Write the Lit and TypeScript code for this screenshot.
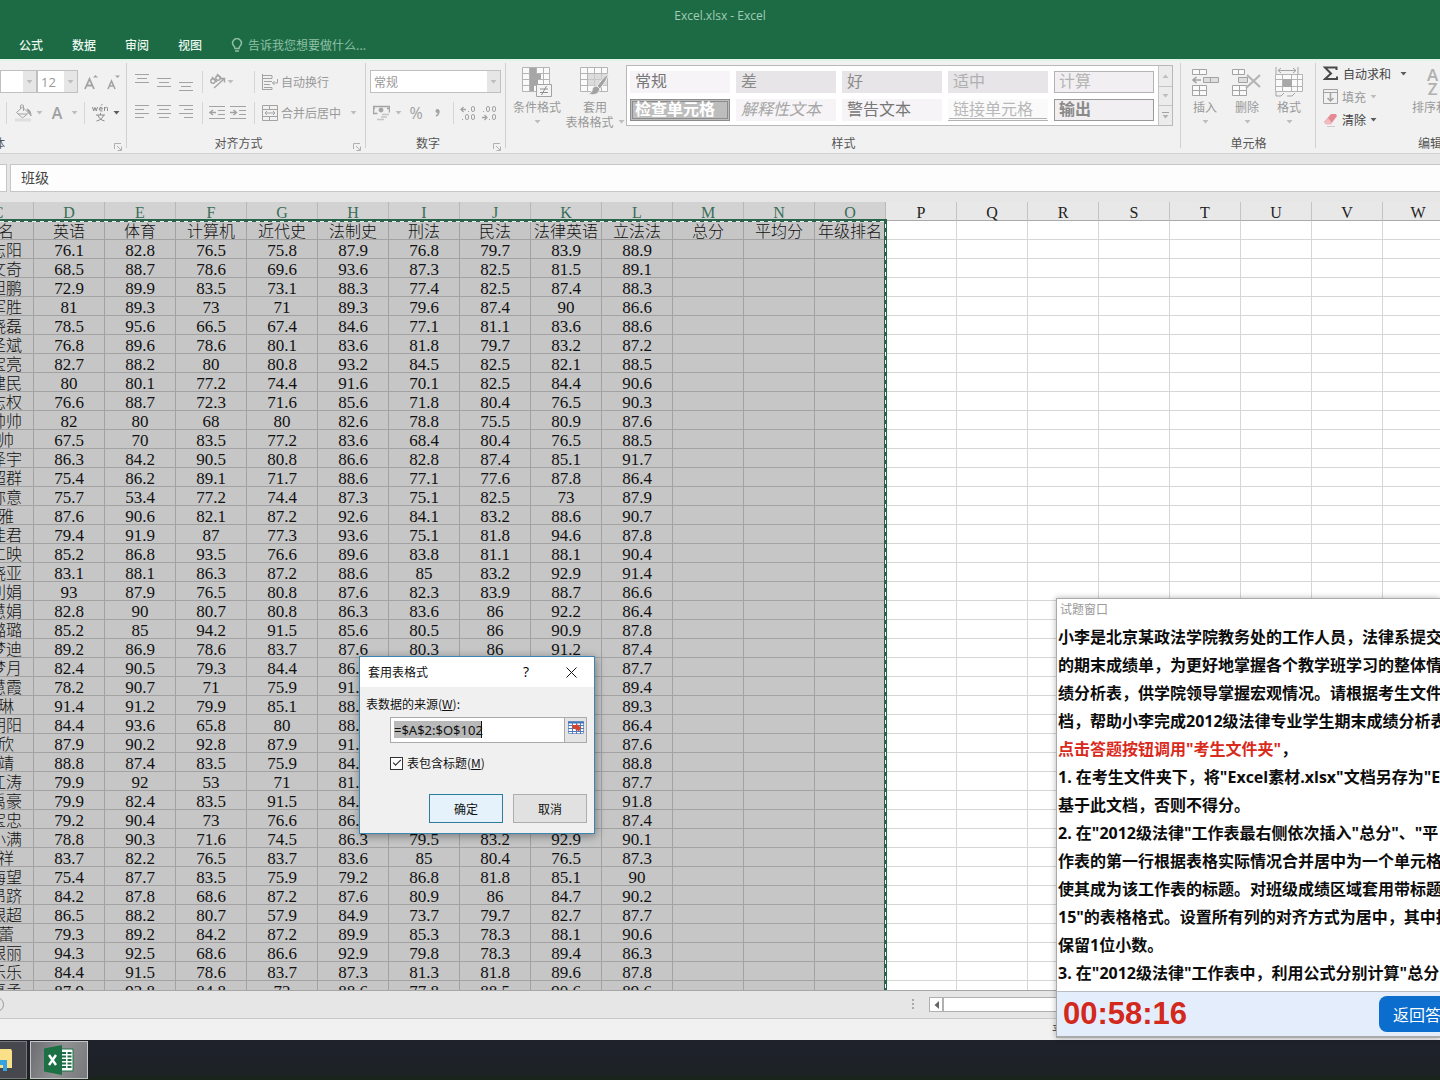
import { LitElement, html, svg, css, nothing } from "lit";
import { customElement } from "lit/decorators.js";
import { classMap } from "lit/directives/class-map.js";

const COLUMNS = "CDEFGHIJKLMNOPQRSTUVW".split("");
const SELECTED = 13;
const HEADS = ["　名", "英语", "体育", "计算机", "近代史", "法制史", "刑法", "民法", "法律英语", "立法法", "总分", "平均分", "年级排名"];

const ROWS = `　志阳|76.1 82.8 76.5 75.8 87.9 76.8 79.7 83.9 88.9
　文奇|68.5 88.7 78.6 69.6 93.6 87.3 82.5 81.5 89.1
　坦鹏|72.9 89.9 83.5 73.1 88.3 77.4 82.5 87.4 88.3
　军胜|81 89.3 73 71 89.3 79.6 87.4 90 86.6
　晓磊|78.5 95.6 66.5 67.4 84.6 77.1 81.1 83.6 88.6
　圣斌|76.8 89.6 78.6 80.1 83.6 81.8 79.7 83.2 87.2
　宝亮|82.7 88.2 80 80.8 93.2 84.5 82.5 82.1 88.5
　建民|80 80.1 77.2 74.4 91.6 70.1 82.5 84.4 90.6
　志权|76.6 88.7 72.3 71.6 85.6 71.8 80.4 76.5 90.3
　帅帅|82 80 68 80 82.6 78.8 75.5 80.9 87.6
　帅|67.5 70 83.5 77.2 83.6 68.4 80.4 76.5 88.5
　泽宇|86.3 84.2 90.5 80.8 86.6 82.8 87.4 85.1 91.7
　超群|75.4 86.2 89.1 71.7 88.6 77.1 77.6 87.8 86.4
　弥意|75.7 53.4 77.2 74.4 87.3 75.1 82.5 73 87.9
　雅|87.6 90.6 82.1 87.2 92.6 84.1 83.2 88.6 90.7
　佳君|79.4 91.9 87 77.3 93.6 75.1 81.8 94.6 87.8
　仁映|85.2 86.8 93.5 76.6 89.6 83.8 81.1 88.1 90.4
　晓亚|83.1 88.1 86.3 87.2 88.6 85 83.2 92.9 91.4
　利娟|93 87.9 76.5 80.8 87.6 82.3 83.9 88.7 86.6
　慧娟|82.8 90 80.7 80.8 86.3 83.6 86 92.2 86.4
　璐璐|85.2 85 94.2 91.5 85.6 80.5 86 90.9 87.8
　梦迪|89.2 86.9 78.6 83.7 87.6 80.3 86 91.2 87.4
　梦月|82.4 90.5 79.3 84.4 86._ - - - 87.7
　慧霞|78.2 90.7 71 75.9 91._ - - - 89.4
　琳|91.4 91.2 79.9 85.1 88._ - - - 89.3
　朝阳|84.4 93.6 65.8 80 88._ - - - 86.4
　欣|87.9 90.2 92.8 87.9 91._ - - - 87.6
　靖|88.8 87.4 83.5 75.9 84._ - - - 88.8
　江涛|79.9 92 53 71 81._ - - - 87.7
　禹豪|79.9 82.4 83.5 91.5 84._ - - - 91.8
　宝忠|79.2 90.4 73 76.6 86._ - - - 87.4
　小满|78.8 90.3 71.6 74.5 86.3 79.5 83.2 92.9 90.1
　祥|83.7 82.2 76.5 83.7 83.6 85 80.4 76.5 87.3
　海望|75.4 87.7 83.5 75.9 79.2 86.8 81.8 85.1 90
　昂跻|84.2 87.8 68.6 87.2 87.6 80.9 86 84.7 90.2
　银超|86.5 88.2 80.7 57.9 84.9 73.7 79.7 82.7 87.7
　蕾|79.3 89.2 84.2 87.2 89.9 85.3 78.3 88.1 90.6
　银丽|94.3 92.5 68.6 86.6 92.9 79.8 78.3 89.4 86.3
　乐乐|84.4 91.5 78.6 83.7 87.3 81.3 81.8 89.6 87.8
　夏孟|87.9 92.8 84.8 72 88.6 77.8 88.5 90.6 89.6`
  .split("\n")
  .map((line) => {
    const [name, marks] = line.split("|");
    return [name, ...marks.split(" ").map((m) => (m === "-" ? "" : m.replace("_", "\u2007")))];
  });

const QUESTION: { text: string; red?: boolean; tail?: string }[] = [
  { text: "小李是北京某政法学院教务处的工作人员，法律系提交" },
  { text: "的期末成绩单，为更好地掌握各个教学班学习的整体情" },
  { text: "绩分析表，供学院领导掌握宏观情况。请根据考生文件" },
  { text: "档，帮助小李完成2012级法律专业学生期末成绩分析表" },
  { text: "点击答题按钮调用\"考生文件夹\"", red: true, tail: "，" },
  { text: "1. 在考生文件夹下，将\"Excel素材.xlsx\"文档另存为\"E" },
  { text: "基于此文档，否则不得分。" },
  { text: "2. 在\"2012级法律\"工作表最右侧依次插入\"总分\"、\"平" },
  { text: "作表的第一行根据表格实际情况合并居中为一个单元格" },
  { text: "使其成为该工作表的标题。对班级成绩区域套用带标题" },
  { text: "15\"的表格格式。设置所有列的对齐方式为居中，其中排" },
  { text: "保留1位小数。" },
  { text: "3. 在\"2012级法律\"工作表中，利用公式分别计算\"总分" },
];

const icon = (w: number, h: number, body: unknown) =>
  html`<svg class="icon" width=${w} height=${h} viewBox="0 0 ${w} ${h}" fill="none" stroke="#a3a3a3" aria-hidden="true">${body}</svg>`;

const arrow = (dark = false) =>
  html`<svg class="icon" width="7" height="4" viewBox="0 0 7 4" aria-hidden="true"><path d="M0.5 0h6L3.5 3.6z" fill=${dark ? "#5a5a5a" : "#bdbdbd"} /></svg>`;

const lines = (rows: [number, number][], y = 0) =>
  icon(16, 18, rows.map(([x, w], i) => svg`<path d="M${x} ${y + i * 4 + 0.5}h${w}" />`));

const launcher = icon(9, 9, svg`<path d="M0.5 6V0.5H7M3 3l4 4M7.5 3.5v4h-4" stroke="#b0b0b0" />`);

@customElement("ribbon-bar")
export class RibbonBar extends LitElement {
  static styles = css`
    :host { display: flex; height: 94px; background: #f1f1f1; border-bottom: 1px solid #d2d2d2; overflow: hidden; box-shadow: inset 0 2px #e2f4ea; color: #999; font-size: 12px; line-height: 16px; }
    .icon { display: block; flex: none; }
    button, select, input { font: inherit; color: inherit; border: 0; background: none; padding: 0; margin: 0; }
    .group { position: relative; box-sizing: border-box; flex: none; display: flex; flex-direction: column; padding: 11px 0 2px; }
    .group::after { content: ""; position: absolute; right: 0; top: 4px; bottom: 5px; width: 1px; background: #d0d0d0; }
    .font { width: 127px; }
    .align { width: 239px; padding-left: 4px; }
    .number { width: 140px; padding-left: 4px; }
    .styles { width: 675px; padding-top: 6px; }
    .cells { width: 135px; padding-top: 6px; }
    .edit { flex: 1; min-width: 0; padding-top: 6px; overflow: hidden; }
    .edit::after { display: none; }
    .row { display: grid; align-items: center; justify-items: center; height: 23px; }
    .two { margin-top: 8px; }
    .row button { display: flex; align-items: center; justify-content: center; }
    .font .one { grid-template-columns: 37px 41px 26px 20px; }
    .font .two { grid-template-columns: 13px 20px 12px 24px 10px 10px 22px 10px; }
    .align .row { grid-template-columns: 22px 22px 22px 10px 20px 22px 10px 22px 62px 20px; }
    .align .one > .icon:nth-child(6) { justify-self: start; }
    .number .two { grid-template-columns: 22px 12px 24px 20px 10px 20px 22px; }
    .text { justify-self: start; white-space: nowrap; }
    .sep { width: 1px; height: 22px; background: #d6d6d6; }
    .caption { display: flex; align-items: center; justify-content: center; margin-top: auto; height: 16px; color: #555; position: relative; }
    .caption .icon { position: absolute; right: 4px; bottom: -1px; }
    .align .caption, .number .caption { padding-right: 20px; }
    .font .caption { justify-content: flex-start; margin-left: -19px; }
    .edit .caption { justify-content: flex-start; padding-left: 102px; white-space: nowrap; }
    .combo { display: flex; box-sizing: border-box; height: 23px; width: 100%; border: 1px solid #c0c0c0; background: #fff; align-items: stretch; }
    .combo input, .combo select { flex: 1; min-width: 0; appearance: none; padding-left: 3px; outline: 0; }
    .combo .size { font: 13px/18px "Open Sans", sans-serif; }
    .combo span { display: flex; width: 13px; align-items: center; justify-content: center; background: #e6e6e6; }
    .number .combo { width: 131px; }
    .glyph { font-family: "Open Sans", sans-serif; font-weight: 600; font-size: 16px; line-height: 20px; color: #a0a0a0; }
    .thin { font-weight: 400; }
    .body { display: flex; align-items: flex-start; }
    .big { display: flex; flex-direction: column; align-items: center; white-space: nowrap; line-height: 15px; }
    .big .pic { height: 34px; display: flex; align-items: center; }
    .big .drop { height: 15px; display: flex; align-items: center; gap: 4px; }
    .styles .body .big { width: 58px; }
    .styles .body .big:first-child { margin-left: 2px; }
    .gallery { display: flex; margin-left: 2px; height: 61px; box-sizing: border-box; border: 1px solid #b8b8b8; background: #fff; width: 547px; }
    .swatches { flex: 1; display: grid; grid-template-columns: repeat(5, 100px); gap: 6px; padding: 5px 3px 4px; }
    .swatches button { display: flex; align-items: flex-start; box-sizing: border-box; height: 22px; padding-left: 4px; font-size: 16px; line-height: 16px; background: #f6f4f6; color: #777; white-space: nowrap; border: 1px solid transparent; }
    .swatches .fill { background: #e7e5e7; color: #8b8b8b; }
    .swatches .pale { color: #b0b0b0; }
    .swatches .box { border-color: #b4b4b4; color: #b4b4b4; background: #f1eff1; }
    .swatches .check { background: #bdbdbd; border: 3px double #8c8c8c; color: #fff; font-weight: 700; line-height: 13px; padding-left: 2px; }
    .swatches .note { font-style: italic; color: #a5a5a5; }
    .swatches .link { border-bottom: 3px double #b4b4b4; color: #b8b8b8; background: #fbfafb; }
    .swatches .out { border-color: #999; color: #8a8a8a; font-weight: 700; background: #f1eff1; }
    .scroll { width: 13px; display: grid; grid-template-rows: 1fr 1fr 1fr; border-left: 1px solid #c4c4c4; background: #ececec; }
    .scroll button { display: flex; align-items: center; justify-content: center; }
    .scroll button + button { border-top: 1px solid #c4c4c4; }
    .cells .body { padding-left: 3px; }
    .cells .big { width: 42px; }
    .list { display: flex; flex-direction: column; padding-left: 7px; width: 88px; margin-top: -3px; }
    .list button { display: flex; align-items: center; gap: 4px; height: 23px; white-space: nowrap; }
    .dark { color: #444; }
    .list .wide .icon:last-child { margin-left: 5px; }
    .sort { align-items: flex-start; padding-left: 5px; }
    .sort .pic { padding-left: 15px; }
    .az { display: flex; flex-direction: column; font: 600 17px/14px "Open Sans", sans-serif; color: #b0b0b0; }
  `;

  private big(pic: unknown, label: string) {
    return html`<button class="big"><span class="pic">${pic}</span><span>${label}</span><span class="drop">${arrow()}</span></button>`;
  }

  render() {
    const grid = svg`<path d="M0.5 0.5h27v24h-27zM0 6.5h28M0 12.5h28M0 18.5h28M7.5 0v25M14.5 0v25M21.5 0v25" fill="#fafafa" stroke="#b4b4b4" />`;
    return html`
      <section class="group font">
        <div class="row one">
          <label class="combo"><input aria-label="字体" /><span>${arrow()}</span></label>
          <label class="combo"><input class="size" aria-label="字号" value="12" size="2" /><span>${arrow()}</span></label>
          <button aria-label="增大字号">${icon(14, 16, svg`<path d="M1 15L5.5 5L10 15M2.8 11.5h5.4" stroke-width="1.8" /><path d="M9 3.5h5L11.5 1z" fill="#a3a3a3" stroke="none" />`)}</button>
          <button aria-label="减小字号">${icon(14, 16, svg`<path d="M1 15L4.5 7L8 15M2.4 12h4.2" stroke-width="1.6" /><path d="M8 1.5h5L10.5 4z" fill="#a3a3a3" stroke="none" />`)}</button>
        </div>
        <div class="row two">
          <i class="sep"></i>
          <button aria-label="填充颜色">${icon(17, 18, svg`<path d="M1.5 8.5L7.500 3l6 6-6 5zM5.500 5V1.500q1.500-1.500 3 0V7M3 10h9" /><path d="M12 5q4 1 4 7l-2-3z" fill="#a3a3a3" /><path d="M0 16h16" stroke="#dedede" stroke-width="3" />`)}</button>
          ${arrow()}
          <button class="glyph" aria-label="字体颜色">A</button>
          ${arrow()}
          <i class="sep"></i>
          <button aria-label="拼音指南">${icon(16, 18, svg`<path d="M0.500 3l1.200 4L3 3.500 4.300 7 5.500 3M7 5h3.500Q10 2.500 8 3.500 6.500 6 8.500 7h2M9 1.500L10.500 0M12.500 7V3M12.500 4.500q3-2.500 3 0V7M4 11h9M8.500 9v2M6 11q1 4.500 6.500 6M11.500 11q-1 4.500-7 6" stroke="#8c8c8c" />`)}</button>
          ${arrow(true)}
        </div>
        <div class="caption">字体${launcher}</div>
      </section>

      <section class="group align">
        <div class="row one">
          <button aria-label="顶端对齐">${lines([[1, 14], [3, 10], [1, 14]], 1)}</button>
          <button aria-label="垂直居中">${lines([[1, 14], [3, 10], [1, 14]], 5)}</button>
          <button aria-label="底端对齐">${lines([[1, 14], [3, 10], [1, 14]], 9)}</button>
          <i class="sep"></i>
          <button aria-label="方向">${icon(17, 17, svg`<circle cx="4" cy="8" r="2.200" stroke-width="1.400" /><path d="M3 4l5 5M8 1l5 5" stroke-width="1.400" /><circle cx="9" cy="5" r="2.200" stroke-width="1.400" /><path d="M5 15L15 6M15.500 9.500V5.500H11.500" stroke-width="1.400" />`)}</button>
          ${arrow()}
          <i class="sep"></i>
          ${icon(16, 16, svg`<path d="M0.500 0v16M0 1.500h10v3H0M2 7.500h8M2 10.500h6M2 13.500h8v2H0M15.500 5v4h-5M12.500 7l-2 2 2 2" />`)}
          <button class="text">自动换行</button>
        </div>
        <div class="row two">
          <button aria-label="左对齐">${lines([[1, 14], [1, 9], [1, 14], [1, 9]], 1)}</button>
          <button aria-label="居中">${lines([[1, 14], [3, 10], [1, 14], [3, 10]], 1)}</button>
          <button aria-label="右对齐">${lines([[1, 14], [6, 9], [1, 14], [6, 9]], 1)}</button>
          <i class="sep"></i>
          <button aria-label="减少缩进量">${icon(17, 14, svg`<path d="M0 0.500h16M9 4.500h7M9 8.500h7M0 12.500h16" /><path d="M1 6.500h6M4 4L1 6.500 4 9" stroke-width="1.500" />`)}</button>
          <button aria-label="增加缩进量">${icon(17, 14, svg`<path d="M0 0.500h16M9 4.500h7M9 8.500h7M0 12.500h16" /><path d="M0 6.500h6M3.500 4L6.500 6.500 3.500 9" stroke-width="1.500" />`)}</button>
          <i class="sep"></i>
          ${icon(16, 16, svg`<path d="M0.500 0.500h15v15h-15zM0 4.500h16M0 11.500h16M7.500 0v4M7.500 12v4M3 8h10M5 6L3 8l2 2M11 6l2 2-2 2" />`)}
          <button class="text">合并后居中</button>
          ${arrow()}
        </div>
        <div class="caption">对齐方式${launcher}</div>
      </section>

      <section class="group number">
        <label class="combo"><select aria-label="数字格式"><option>常规</option></select><span>${arrow()}</span></label>
        <div class="row two">
          <button aria-label="会计数字格式">${icon(17, 16, svg`<path d="M4.500 8.500h-4v-7h16v6M0 3.500h2M14 3.500h3" stroke-width="1.400" /><circle cx="8" cy="5" r="2" fill="#a3a3a3" /><path d="M9 9.500h7M8 12h6M4 14.500h7" stroke="#c4c4c4" stroke-width="1.500" />`)}</button>
          ${arrow()}
          <button class="glyph thin">%</button>
          <button aria-label="千位分隔样式">${icon(8, 12, svg`<circle cx="3.500" cy="4" r="2" fill="#a3a3a3" stroke="none" /><path d="M4.800 4q0.300 3.500-2.800 5" stroke-width="1.500" />`)}</button>
          <i class="sep"></i>
          <button aria-label="增加小数位数">${icon(16, 16, svg`<path d="M1 4.500h5M3.500 2L1 4.500 3.500 7" stroke-width="1.300" /><rect x="11.500" y="1.500" width="3" height="5" rx="1.500" /><path d="M8.500 6v1M2.500 14v1" /><rect x="5.500" y="9.500" width="3" height="5" rx="1.500" /><rect x="11.500" y="9.500" width="3" height="5" rx="1.500" />`)}</button>
          <button aria-label="减少小数位数">${icon(16, 16, svg`<path d="M1 12.500h5M3.500 10L6 12.500 3.500 15" stroke-width="1.300" /><rect x="11.500" y="9.500" width="3" height="5" rx="1.500" /><path d="M8.500 14v1M2.500 6v1" /><rect x="5.500" y="1.500" width="3" height="5" rx="1.500" /><rect x="11.500" y="1.500" width="3" height="5" rx="1.500" />`)}</button>
        </div>
        <div class="caption">数字${launcher}</div>
      </section>

      <section class="group styles">
        <div class="body">
          ${this.big(icon(31, 31, svg`${grid}<path d="M8 1h6v6H8zM8 7h11v5H8zM8 12h8v6H8zM8 18h4v6H8z" fill="#a6a6a6" stroke="none" /><path d="M14.500 17.500h15v12h-15z" fill="#f4f4f4" /><path d="M18 22h8M18 25.500h8M24.500 19l-5 9" stroke="#8f8f8f" />`), "条件格式")}
          <button class="big"><span class="pic">${icon(31, 30, svg`${grid}<path d="M8 7h19v12H8z" fill="#cfcfcf" fill-opacity=".7" stroke="none" /><path d="M29 6q-6 4-12 13l3 3q7-8 9-16z" fill="#a3a3a3" stroke="#f1f1f1" /><path d="M17 19q-5 0-5 5-2 3-4 3 10 3 12-5z" fill="#a3a3a3" stroke="#f1f1f1" />`)}</span><span>套用</span><span class="drop"><span>表格格式</span>${arrow()}</span></button>
          <div class="gallery">
            <div class="swatches">
              <button>常规</button><button class="fill">差</button><button class="fill">好</button><button class="fill pale">适中</button><button class="box">计算</button>
              <button class="check">检查单元格</button><button class="note">解释性文本</button><button>警告文本</button><button class="link">链接单元格</button><button class="out">输出</button>
            </div>
            <div class="scroll">
              <button aria-label="上一行">${icon(7, 4, svg`<path d="M0.500 4h6L3.500 0.500z" fill="#c0c0c0" stroke="none" />`)}</button>
              <button aria-label="下一行">${arrow()}</button>
              <button aria-label="其他">${icon(7, 8, svg`<path d="M0 0.500h7" /><path d="M0.500 3h6L3.500 6.500z" fill="#b0b0b0" stroke="none" />`)}</button>
            </div>
          </div>
        </div>
        <div class="caption">样式</div>
      </section>

      <section class="group cells">
        <div class="body">
          ${this.big(icon(27, 28, svg`<path d="M0.500 1.500h14v5h-14zM7.500 1v6M0.500 17.500h14v10h-14zM0 22.500h15M7.500 17v11" fill="#fafafa" /><path d="M11.500 9.500h15v5h-15zM18.500 9v6" fill="#dedede" /><path d="M1 12h8M4.500 9L1 12l3.500 3" stroke-width="1.600" />`), "插入")}
          ${this.big(icon(30, 28, svg`<path d="M0.500 1.500h12v5h-12zM6.500 1v6M0.500 17.500h14v10h-14zM0 22.500h15M7.500 17v11" fill="#fafafa" /><path d="M6.500 9.500h9v5h-9z" fill="#dedede" /><path d="M15 7l13 12M28 7L14 20" stroke="#b4b4b4" stroke-width="2.200" />`), "删除")}
          ${this.big(icon(29, 31, svg`<path d="M1 0v7M23 0v7M3 3.500h18M6 1L3 3.500 6 6M18 1l3 2.500L18 6" /><path d="M0.500 7.500h27v17h-27zM0 12.500h28M0 19.500h28M7.500 7v18M16.500 7v18M22.500 7v18" fill="#fafafa" stroke="#b4b4b4" /><path d="M8 12h9v8H8z" fill="#a8a8a8" stroke="none" /><path d="M1 25v4h5l3-3M12 29h5l3-3" />`), "格式")}
        </div>
        <div class="caption">单元格</div>
      </section>

      <section class="group edit">
        <div class="body">
          <div class="list">
            <button class="dark wide">${icon(16, 15, svg`<path d="M13.500 4V1.500H2L8 7.500 2 13H14V10.500" stroke="#4a4a4a" stroke-width="2" />`)}自动求和${arrow(true)}</button>
            <button>${icon(15, 15, svg`<path d="M0.500 0.500h14v14h-14zM0 3.500h15" /><path d="M7.500 4v8M4.500 9l3 3 3-3" stroke-width="1.500" />`)}填充${arrow()}</button>
            <button class="dark">${icon(15, 14, svg`<path d="M1 9l7-8h5l1 2-6 8H3z" fill="#e58a92" stroke="none" /><path d="M1 9l4-4 4 5-1 1.500H3z" fill="#f1bcc1" stroke="none" /><path d="M4 13.500h8" stroke="#ccc" />`)}清除${arrow(true)}</button>
          </div>
          <button class="big sort"><span class="pic"><span class="az"><span>A</span><span>Z</span></span></span><span>排序和</span></button>
        </div>
        <div class="caption">编辑</div>
      </section>
    `;
  }
}

@customElement("score-sheet")
export class ScoreSheet extends LitElement {
  static styles = css`
    :host { display: block; position: relative; overflow: hidden; background: #fff; }
    table { table-layout: fixed; width: 1491px; margin-left: -37px; border-collapse: separate; border-spacing: 0; font: 17px/22px "Liberation Serif", "Noto Sans CJK SC", serif; color: #111; }
    th, td { box-sizing: border-box; height: 19px; padding: 0; border-right: 1px solid #d6d6d6; border-bottom: 1px solid #d6d6d6; font-weight: 300; text-align: center; white-space: pre; }
    td div, th div { height: 18px; }
    thead th { background: #e8e8e8; border-right-color: #c4c4c4; border-bottom-color: #aaa; font-size: 16px; color: #222; }
    thead .on { background: #d2d2d2; color: #3a6e57; border-right-color: #b8b8b8; }
    tbody .on { background: #c6c6c6; border-color: #a2a2a2; }
    .names td { font-size: 16px; }
    .name { font-size: 16px; }
    .range { position: absolute; left: -3px; width: 884px; top: 17px; bottom: -3px; border: 3px solid #2b624b; pointer-events: none; }
    .range::before { content: ""; position: absolute; left: 0; right: 0; top: -1px; height: 1px; background: repeating-linear-gradient(90deg, #e8f6ee 0 4px, transparent 4px 8px); }
    .range::after { content: ""; position: absolute; top: 2px; bottom: 0; right: -2px; width: 1px; background: repeating-linear-gradient(180deg, #f4fff8 0 4px, transparent 4px 8px); }
  `;

  private row(values: string[], cls = "") {
    return html`<tr class=${cls}>
      ${COLUMNS.map((_, i) => html`<td class=${classMap({ on: i < SELECTED, name: i === 0 })}><div>${values[i] ?? nothing}</div></td>`)}
    </tr>`;
  }

  render() {
    return html`
      <table>
        <thead><tr>${COLUMNS.map((c, i) => html`<th scope="col" class=${classMap({ on: i < SELECTED })}><div>${c}</div></th>`)}</tr></thead>
        <tbody>${this.row(HEADS, "names")}${ROWS.map((r) => this.row(r))}</tbody>
      </table>
      <div class="range"></div>
    `;
  }
}

@customElement("format-dialog")
export class FormatDialog extends LitElement {
  static styles = css`
    :host { position: absolute; left: 359px; top: 656px; width: 236px; box-sizing: border-box; border: 1px solid #3a86b0; background: #f0f0f0; box-shadow: 1px 2px 9px rgba(0, 0, 0, .4); font-size: 12px; line-height: 16px; color: #111; }
    header { display: flex; align-items: center; height: 30px; background: #fff; padding: 0 8px; }
    h2 { flex: 1; margin: 0; font-size: 12px; font-weight: 400; }
    header button { border: 0; background: none; padding: 0; width: 30px; height: 28px; display: flex; align-items: center; justify-content: center; font: 400 14px/16px "Open Sans", sans-serif; }
    header button + button { margin-left: 15px; }
    .form { display: flex; flex-direction: column; padding: 9px 7px 10px 6px; }
    .field { display: flex; margin: 5px 0 0 24px; height: 26px; }
    .field input { flex: 1; min-width: 0; box-sizing: border-box; border: 1px solid #aaa; padding: 0 3px; outline: 0; font: 13px/18px "Noto Sans", "Noto Sans CJK SC", sans-serif; color: #111; background: linear-gradient(#111, #111) 90px 3px / 1px 17px no-repeat, linear-gradient(#b9b9b9, #b9b9b9) 3px 3px / 87px 17px no-repeat, #fff; }
    .field button { width: 22px; padding: 3px 0 0; border: 1px solid #aaa; border-left: 0; background: #e4e4e4; display: flex; justify-content: center; }
    .check { display: flex; align-items: center; gap: 4px; margin: 12px 0 0 24px; }
    .check input { appearance: none; margin: 0; width: 13px; height: 13px; border: 1px solid #333; background: #fff; display: grid; place-items: center; }
    .check input:checked::before { content: ""; width: 7px; height: 3px; border: solid #222; border-width: 0 0 1px 1px; transform: rotate(-45deg) translate(1px, -1px); }
    .actions { display: flex; justify-content: flex-end; gap: 10px; margin-top: 23px; }
    .actions button { box-sizing: border-box; width: 74px; height: 29px; border: 1px solid #adadad; background: #e1e1e1; font: inherit; padding: 0; color: inherit; }
    .actions .ok { border-color: #2b7c9e; background: #e5f1fb; }
  `;

  render() {
    return html`
      <header>
        <h2>套用表格式</h2>
        <button>?</button>
        <button aria-label="关闭"><svg width="11" height="11" viewBox="0 0 11 11" stroke="#111"><path d="M0.500 0.500l10 10M10.500 0.500l-10 10" /></svg></button>
      </header>
      <div class="form">
        <label for="source">表数据的来源(<u>W</u>):</label>
        <div class="field">
          <input id="source" value="=$A$2:$O$102" />
          <button aria-label="选择区域">
            <svg width="16" height="14" viewBox="0 0 16 14"><path d="M0.500 0.500h15v12h-15z" fill="#fff" stroke="#8aa4c8" /><path d="M0 1.500h16" stroke="#4472b8" stroke-width="2" /><path d="M0 4.500h16M0 7.500h16M0 10.500h16M4.500 1v12M8.500 1v12M12.500 1v12" stroke="#4f7cc0" /><path d="M4 4h4V2.500l5 4-2 4-3-2-3-1z" fill="#d8432b" /></svg>
          </button>
        </div>
        <label class="check"><input type="checkbox" checked /><span>表包含标题(<u>M</u>)</span></label>
        <div class="actions"><button class="ok">确定</button><button>取消</button></div>
      </div>
    `;
  }
}

@customElement("exam-window")
export class ExamWindow extends LitElement {
  static styles = css`
    :host { position: absolute; right: 0; bottom: 42px; width: 384px; height: 440px; box-sizing: border-box; display: flex; flex-direction: column; overflow: hidden; border: solid #aaa; border-width: 1px 0 2px 1px; background: #fff; box-shadow: 0 0 6px rgba(0, 0, 0, .3); }
    h2 { margin: 0; padding: 1px 0 0 3px; height: 24px; box-sizing: border-box; font-size: 12px; line-height: 18px; font-weight: 400; color: #999; }
    .text { flex: 1; min-height: 0; overflow: hidden; padding-left: 1px; font: 700 16px/28px "Open Sans", "Noto Sans CJK SC", sans-serif; color: #0c0c0c; }
    p { margin: 0; white-space: nowrap; }
    .red { color: #d92a1c; }
    footer { display: flex; align-items: center; justify-content: space-between; height: 44px; border-top: 1px solid #b8bcc4; background: #e4edfb; padding-left: 6px; }
    time { font: 700 31px/40px "Liberation Sans Narrow", "Liberation Sans", sans-serif; color: #d3281c; white-space: pre; }
    button { width: 61px; height: 36px; border: 0; border-radius: 8px 0 0 8px; background: #0b6dce; color: #fff; font: 16px/20px "Noto Sans CJK SC", sans-serif; padding: 0 0 0 14px; text-align: left; white-space: nowrap; overflow: hidden; }
  `;

  render() {
    return html`
      <h2>试题窗口</h2>
      <div class="text">${QUESTION.map((q) => html`<p>${q.red ? html`<span class="red">${q.text}</span>${q.tail}` : q.text}</p>`)}</div>
      <footer><time>00:58:16</time><button>返回答</button></footer>
    `;
  }
}

@customElement("app-root")
export class AppRoot extends LitElement {
  static styles = css`
    :host { position: relative; display: flex; flex-direction: column; height: 100vh; overflow: hidden; background: #e6e6e6; font: 12px/16px "Noto Sans CJK SC", sans-serif; }
    .title { height: 59px; background: #1d6b45; display: flex; flex-direction: column; color: #fff; }
    h1 { margin: 0; height: 31px; font: 12px/31px "Open Sans", sans-serif; color: #a3ccb5; text-align: center; }
    nav { display: flex; align-items: center; height: 28px; padding-left: 19px; gap: 29px; }
    nav a { color: #eaf7ef; text-decoration: none; font-weight: 500; }
    .tell { display: flex; align-items: center; gap: 5px; color: #8fc0a5; border: 0; background: none; font: inherit; padding: 0; }
    .formula { display: flex; gap: 3px; padding: 10px 0; height: 28px; }
    .namebox { width: 6px; background: #fff; border: solid #c6c6c6; border-width: 1px 1px 1px 0; }
    .formula input { flex: 1; min-width: 0; border: 1px solid #c6c6c6; border-right: 0; background: #fdfdfd; padding: 0 10px 2px; font: 14px/20px "Noto Sans CJK SC", sans-serif; color: #444; outline: 0; }
    score-sheet { flex: 1; min-height: 0; }
    .tabs { display: flex; align-items: center; height: 27px; border-top: 1px solid #a6a6a6; border-bottom: 1px solid #c9c9c9; overflow: hidden; }
    .add { flex: none; box-sizing: border-box; width: 15px; height: 15px; margin-left: -11px; border: 1px solid #999; border-radius: 50%; background: none; padding: 0; }
    .grip { margin-left: 908px; width: 2px; height: 11px; background: repeating-linear-gradient(#a8a8a8 0 2px, transparent 2px 4px); }
    .hbar { flex: 1; display: flex; margin-left: 15px; height: 13px; border: 1px solid #b0b0b0; background: #fff; }
    .hbar button { width: 14px; padding: 0; border: 0; border-right: 2px solid #b0b0b0; background: #fff; display: flex; align-items: center; justify-content: center; }
    .status { box-sizing: border-box; display: flex; align-items: center; height: 21px; background: #f1f1f1; color: #555; padding-left: 1052px; overflow: hidden; }
    .task { display: flex; gap: 3px; height: 38px; background: linear-gradient(#1f222b, #1d2226 85%, #192418); padding: 1px 0; }
    .task button { box-sizing: border-box; padding: 0; border: 1px solid #c4c6c8; background: linear-gradient(110deg, #6c6d72, #909192 50%, #77787b); width: 58px; display: flex; align-items: center; justify-content: center; }
    .task .folder { width: 27px; border-color: #77787c; border-left: 0; background: #47484d; justify-content: flex-start; }
  `;

  render() {
    return html`
      <div class="title">
        <h1>Excel.xlsx - Excel</h1>
        <nav>
          <a href="#formula">公式</a><a href="#data">数据</a><a href="#review">审阅</a><a href="#view">视图</a>
          <button class="tell">
            <svg width="12" height="15" viewBox="0 0 12 15" fill="none" stroke="#8fc0a5" stroke-width="1.500"><path d="M4 10.500Q4 9 2.500 7.500A4.300 4.300 0 1 1 9.500 7.500Q8 9 8 10.500zM4 13h4" /></svg>
            告诉我您想要做什么...
          </button>
        </nav>
      </div>
      <ribbon-bar></ribbon-bar>
      <div class="formula"><div class="namebox"></div><input aria-label="编辑栏" value="班级" /></div>
      <score-sheet></score-sheet>
      <div class="tabs">
        <button class="add" aria-label="新工作表"></button>
        <div class="grip"></div>
        <div class="hbar"><button aria-label="向左滚动"><svg width="5" height="8" viewBox="0 0 5 8"><path d="M5 0v8L0.500 4z" fill="#666" /></svg></button></div>
      </div>
      <div class="status">平</div>
      <div class="task">
        <button class="folder" aria-label="文件资源管理器"><svg width="13" height="22" viewBox="0 0 13 22"><path d="M0 0h11l1 2v17H0z" fill="#fbe08a" /><path d="M0 11h7v11H3v-6H0z" fill="#36a3e0" /></svg></button>
        <button aria-label="Excel">
          <svg width="30" height="30" viewBox="0 0 30 30"><path d="M15 4h14v22H15z" fill="#fff" stroke="#1d7044" /><path d="M18 7h4v2h-4zM23.500 7h4v2h-4zM18 10.500h4v2h-4zM23.500 10.500h4v2h-4zM18 14h4v2h-4zM23.500 14h4v2h-4zM18 17.500h4v2h-4zM23.500 17.500h4v2h-4zM18 21h4v2h-4zM23.500 21h4v2h-4z" fill="#1d7044" /><path d="M0 3.500L18 0v30L0 26.500z" fill="#1d7044" /><path d="M5 10l7 10M12 10L5 20" stroke="#fff" stroke-width="2.400" /></svg>
        </button>
      </div>
      <format-dialog></format-dialog>
      <exam-window></exam-window>
    `;
  }
}
